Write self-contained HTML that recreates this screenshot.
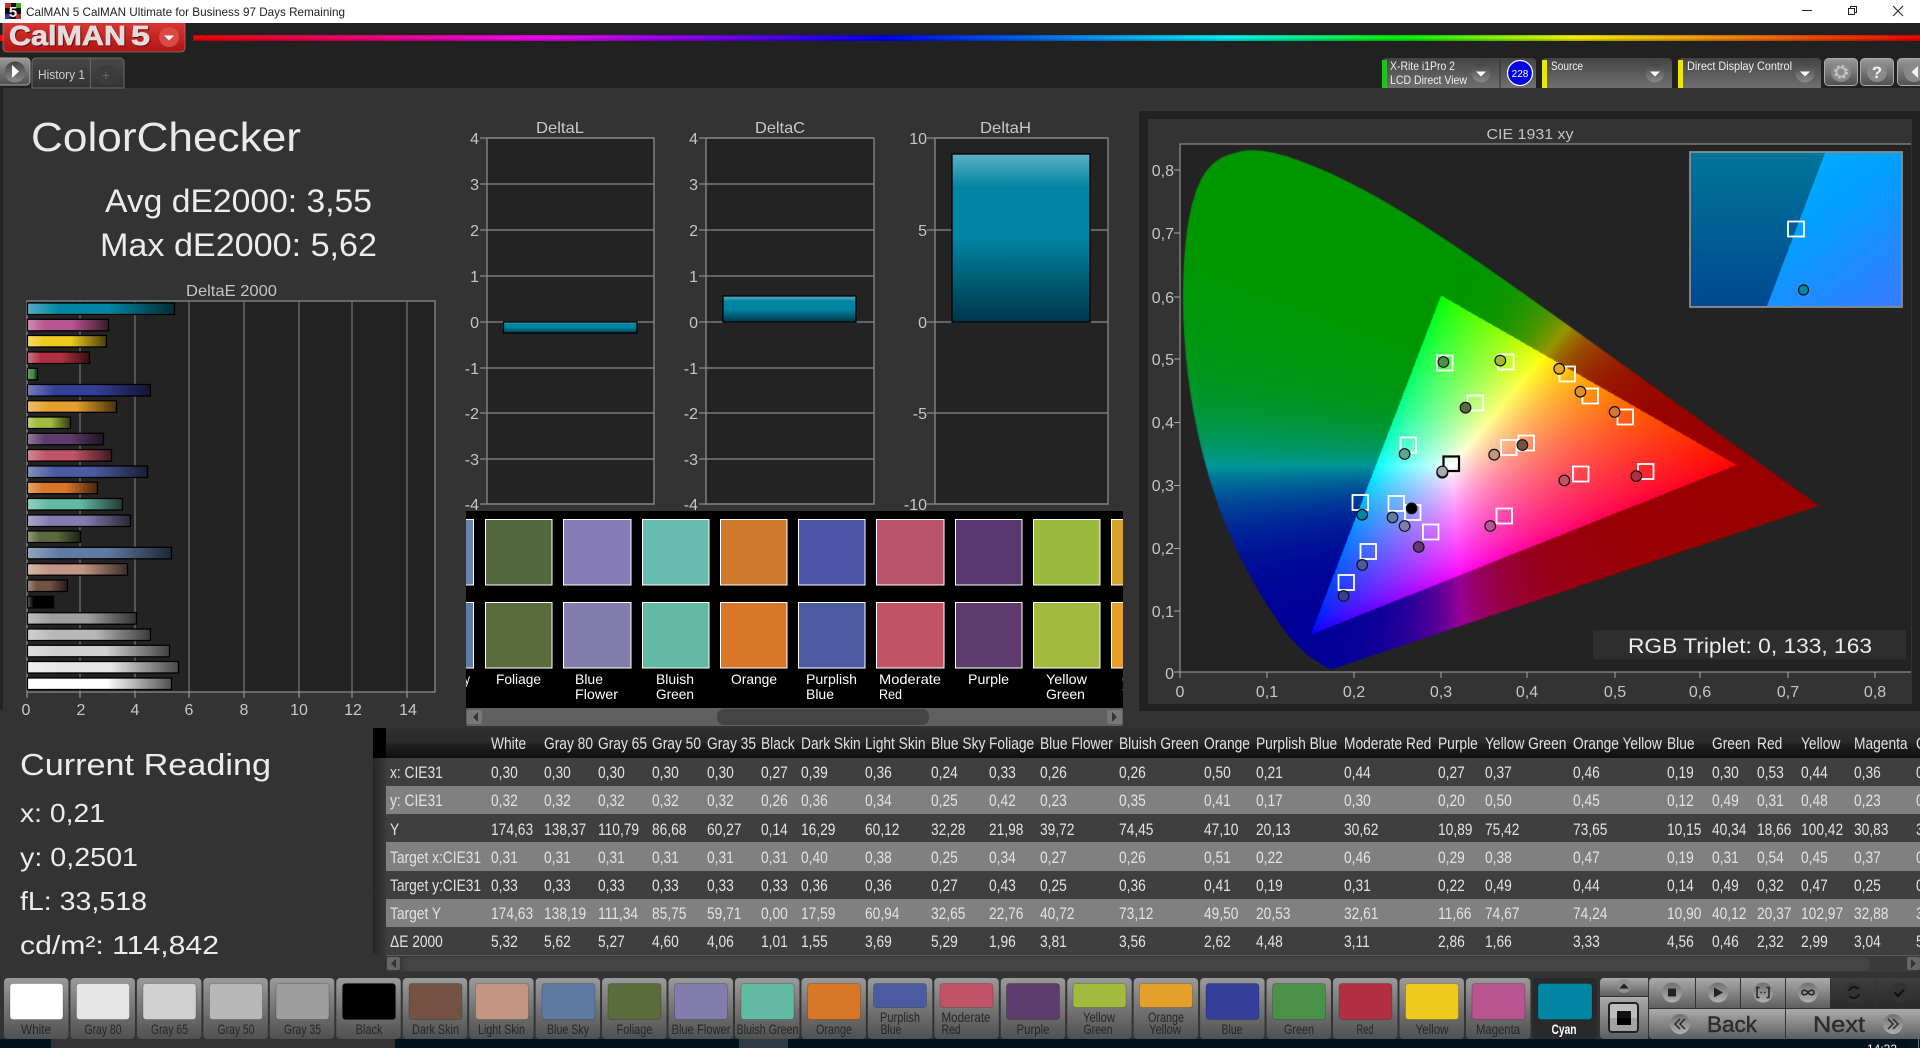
<!DOCTYPE html>
<html><head><meta charset="utf-8"><title>CalMAN 5</title>
<style>
html,body{margin:0;padding:0;width:1920px;height:1048px;overflow:hidden;background:#333}
#plotbg{position:absolute;left:1139px;top:111px;width:781px;height:600px;background:#222}
#plotin{position:absolute;left:1148px;top:119px;width:764px;height:585px;background:#333}
#plot{position:absolute;left:1180px;top:144px;width:731px;height:528px;background:#232323}
#cie{position:absolute;left:1180px;top:144px}
svg#m{position:absolute;left:0;top:0}
svg text{font-family:"Liberation Sans",sans-serif}
.c{position:absolute;top:731px;font:17px/28.17px "Liberation Sans",sans-serif;color:#e2e2e2;transform:scaleX(.81);transform-origin:0 0;white-space:nowrap}
.c span{position:relative;top:-1px}
.ax{fill:#c6c6c6;font-size:16px}
.sw{fill:#fff;font-size:14px}
.tl{fill:#262626;font-size:14px;text-anchor:middle}
</style></head><body>
<div id="plotbg"></div><div id="plotin"></div><div id="plot"></div>
<canvas id="cie" width="731" height="528"></canvas>
<svg id="m" width="1920" height="1048" viewBox="0 0 1920 1048" xmlns="http://www.w3.org/2000/svg">
<defs>
<linearGradient id="rb" x1="0" x2="1" y1="0" y2="0"><stop offset="0" stop-color="#f00"/><stop offset=".2" stop-color="#f0f"/><stop offset=".4" stop-color="#00f"/><stop offset=".6" stop-color="#0ff"/><stop offset=".7" stop-color="#0f0"/><stop offset=".8" stop-color="#ff0"/><stop offset="1" stop-color="#f00"/></linearGradient>
<linearGradient id="rbs" x1="0" x2="0" y1="0" y2="1"><stop offset="0" stop-color="#000" stop-opacity=".25"/><stop offset=".4" stop-color="#000" stop-opacity="0"/><stop offset="1" stop-color="#000" stop-opacity=".35"/></linearGradient>
<linearGradient id="logo" x1="0" x2="0" y1="0" y2="1"><stop offset="0" stop-color="#dc3a36"/><stop offset="1" stop-color="#b01414"/></linearGradient>
<linearGradient id="ctl" x1="0" x2="0" y1="0" y2="1"><stop offset="0" stop-color="#444"/><stop offset="1" stop-color="#6f6f6f"/></linearGradient>
<linearGradient id="btn" x1="0" x2="0" y1="0" y2="1"><stop offset="0" stop-color="#9a9a9a"/><stop offset="1" stop-color="#4f4f4f"/></linearGradient>
<linearGradient id="tab" x1="0" x2="0" y1="0" y2="1"><stop offset="0" stop-color="#484848"/><stop offset="1" stop-color="#333"/></linearGradient>
<linearGradient id="knob" x1="0" x2="0" y1="0" y2="1"><stop offset="0" stop-color="#454545"/><stop offset="1" stop-color="#8a8a8a"/></linearGradient>
<linearGradient id="knob2" x1="0" x2="0" y1="0" y2="1"><stop offset="0" stop-color="#707070"/><stop offset="1" stop-color="#b0b0b0"/></linearGradient>
<linearGradient id="hb" x1="0" x2="1" y1="0" y2="0"><stop offset="0" stop-color="#fff" stop-opacity=".32"/><stop offset=".22" stop-color="#fff" stop-opacity="0"/><stop offset=".55" stop-color="#000" stop-opacity="0"/><stop offset="1" stop-color="#000" stop-opacity=".68"/></linearGradient>
<linearGradient id="vb" x1="0" x2="0" y1="0" y2="1"><stop offset="0" stop-color="#5fb0c6"/><stop offset=".2" stop-color="#0085a3"/><stop offset=".5" stop-color="#0085a3"/><stop offset="1" stop-color="#003548"/></linearGradient>
<linearGradient id="tile" x1="0" x2="0" y1="0" y2="1"><stop offset="0" stop-color="#9a9a9a"/><stop offset="1" stop-color="#505050"/></linearGradient>
<linearGradient id="tile2" x1="0" x2="0" y1="0" y2="1"><stop offset="0" stop-color="#ababab"/><stop offset="1" stop-color="#5e5e5e"/></linearGradient>
<linearGradient id="dk" x1="0" x2="0" y1="0" y2="1"><stop offset="0" stop-color="#3e3e3e"/><stop offset="1" stop-color="#2a2a2a"/></linearGradient>
<linearGradient id="th" x1="0" x2="0" y1="0" y2="1"><stop offset="0" stop-color="#303030"/><stop offset=".5" stop-color="#2a2a2a"/><stop offset=".52" stop-color="#222"/><stop offset="1" stop-color="#0e0e0e"/></linearGradient>
<linearGradient id="rs" x1="0" x2="1" y1="0" y2="0"><stop offset="0" stop-color="#262626"/><stop offset="1" stop-color="#3a3a3a"/></linearGradient>
<linearGradient id="inl" x1="0" x2="0" y1="0" y2="1"><stop offset="0" stop-color="#007499"/><stop offset="1" stop-color="#004a90"/></linearGradient>
<linearGradient id="inr" x1="0" x2="1" y1="0" y2="1"><stop offset="0" stop-color="#00bdff"/><stop offset=".5" stop-color="#00a0ff"/><stop offset="1" stop-color="#3a7aff"/></linearGradient>
<clipPath id="swc"><rect x="466" y="511" width="657" height="197"/></clipPath>
<clipPath id="bt"><rect x="0" y="1039" width="1920" height="9"/></clipPath>
</defs>

<!-- title bar -->
<rect x="0" y="0" width="1920" height="23" fill="#fff"/>
<rect x="5" y="3" width="16" height="16" fill="#111"/>
<rect x="5" y="3" width="6" height="5" fill="#b33"/><rect x="16" y="3" width="5" height="5" fill="#3a3"/><rect x="5" y="14" width="5" height="5" fill="#33a"/><rect x="16" y="14" width="5" height="5" fill="#a33"/>
<text x="13" y="17" font-size="15" font-weight="bold" fill="#eee" text-anchor="middle">5</text>
<text x="26" y="16" font-size="12" fill="#222" textLength="319" lengthAdjust="spacingAndGlyphs">CalMAN 5 CalMAN Ultimate for Business 97 Days Remaining</text>
<rect x="1802" y="10" width="10" height="1" fill="#222"/>
<path d="M1848.500 8.500h6v6h-6zM1850.500 8.500v-2h6v6h-2" fill="none" stroke="#222"/>
<path d="M1893 6l10 10M1903 6l-10 10" stroke="#222" fill="none"/>

<!-- header -->
<rect x="0" y="23" width="1920" height="65" fill="#212121"/>
<rect x="0" y="35" width="4" height="6" fill="#f00"/>
<rect x="193" y="35" width="1727" height="6" fill="url(#rb)"/>
<rect x="193" y="35" width="1727" height="6" fill="url(#rbs)"/>
<rect x="3" y="20" width="182" height="32" rx="4" fill="url(#logo)" stroke="#999" stroke-width=".6"/>
<rect x="0" y="19" width="200" height="4" fill="#fff"/>
<g style="filter:drop-shadow(1px 1px 0 #6a0a0a)">
<text x="9" y="45" font-size="28" font-weight="bold" fill="#e4dcdc" stroke="#e4dcdc" stroke-width=".7" textLength="117" lengthAdjust="spacingAndGlyphs">CalMAN</text>
<text x="131" y="45" font-size="28" font-weight="bold" fill="#e4dcdc" stroke="#e4dcdc" stroke-width=".7" textLength="19" lengthAdjust="spacingAndGlyphs">5</text>
</g>
<circle cx="169" cy="37" r="10" fill="#d84a46"/><path d="M164 35.500h10l-5 5z" fill="#fff"/>

<rect x="-4" y="58" width="34" height="27" rx="4" fill="url(#btn)" stroke="#aaa"/>
<circle cx="15" cy="72" r="10.500" fill="url(#knob)"/><path d="M12 65l7 6.500-7 6.500z" fill="#fff"/>
<path d="M32 88V62a4 4 0 0 1 4-4h84a4 4 0 0 1 4 4v26z" fill="url(#tab)" stroke="#6a6a6a"/>
<line x1="90.500" y1="58" x2="90.500" y2="88" stroke="#666"/>
<text x="38" y="79" font-size="13" fill="#cfcfcf" textLength="47" lengthAdjust="spacingAndGlyphs">History 1</text>
<circle cx="106" cy="75" r="10" fill="#3c3c3c"/><path d="M106 72v7M102.500 75.500h7" stroke="#666" fill="none"/>

<!-- device controls -->
<path d="M1382 88V62a4 4 0 0 1 4-4h146a4 4 0 0 1 4 4v26z" fill="url(#ctl)"/>
<rect x="1382" y="60" width="5" height="28" fill="#1fc21f"/>
<line x1="1500" y1="60" x2="1500" y2="88" stroke="#333"/>
<text x="1390" y="70" font-size="12" fill="#f0f0f0" textLength="65" lengthAdjust="spacingAndGlyphs">X-Rite i1Pro 2</text>
<text x="1390" y="84" font-size="12" fill="#f0f0f0" textLength="77" lengthAdjust="spacingAndGlyphs">LCD Direct View</text>
<circle cx="1481" cy="73" r="9.500" fill="url(#knob)"/><path d="M1476 71.500h10l-5 5z" fill="#fff"/>
<circle cx="1520" cy="73" r="12.500" fill="#0000e8" stroke="#fff" stroke-width="1.200"/>
<text x="1520" y="77" font-size="10" fill="#fff" text-anchor="middle">228</text>
<path d="M1542 88V62a4 4 0 0 1 4-4h122a4 4 0 0 1 4 4v26z" fill="url(#ctl)"/>
<rect x="1542" y="60" width="5" height="28" fill="#e8e800"/>
<text x="1551" y="70" font-size="12" fill="#f0f0f0" textLength="32" lengthAdjust="spacingAndGlyphs">Source</text>
<circle cx="1655" cy="73" r="9.500" fill="url(#knob)"/><path d="M1650 71.500h10l-5 5z" fill="#fff"/>
<path d="M1678 88V62a4 4 0 0 1 4-4h135a4 4 0 0 1 4 4v26z" fill="url(#ctl)"/>
<rect x="1678" y="60" width="5" height="28" fill="#e8e800"/>
<text x="1687" y="70" font-size="12" fill="#f0f0f0" textLength="105" lengthAdjust="spacingAndGlyphs">Direct Display Control</text>
<circle cx="1805" cy="73" r="9.500" fill="url(#knob)"/><path d="M1800 71.500h10l-5 5z" fill="#fff"/>
<rect x="1824.500" y="58.500" width="33" height="27" rx="4" fill="url(#btn)" stroke="#aaa"/>
<circle cx="1841" cy="72" r="10" fill="#8a8a8a"/>
<circle cx="1841" cy="72" r="5.500" fill="none" stroke="#c4c4c4" stroke-width="3" stroke-dasharray="2.400 2"/><circle cx="1841" cy="72" r="4.500" fill="none" stroke="#c4c4c4" stroke-width="1.600"/>
<rect x="1860.500" y="58.500" width="33" height="27" rx="4" fill="url(#btn)" stroke="#aaa"/>
<circle cx="1877" cy="72" r="10" fill="#8a8a8a"/>
<text x="1877" y="78" font-size="17" font-weight="bold" fill="#f2f2f2" text-anchor="middle">?</text>
<rect x="1897.500" y="58.500" width="34" height="27" rx="4" fill="url(#btn)" stroke="#aaa"/>
<circle cx="1914" cy="72" r="10" fill="#8a8a8a"/><path d="M1918 66v12l-6.500-6z" fill="#f2f2f2"/>

<!-- left strip -->
<rect x="0" y="88" width="3" height="622" fill="#232323"/>

<!-- headline -->
<text x="31" y="151" font-size="41" fill="#eaeaea" textLength="270" lengthAdjust="spacingAndGlyphs">ColorChecker</text>
<text x="105" y="212" font-size="32" fill="#ececec" textLength="267" lengthAdjust="spacingAndGlyphs">Avg dE2000: 3,55</text>
<text x="100" y="256" font-size="32" fill="#ececec" textLength="277" lengthAdjust="spacingAndGlyphs">Max dE2000: 5,62</text>

<!-- DeltaE chart -->
<text x="186" y="296" font-size="16" fill="#c4c4c4" textLength="91" lengthAdjust="spacingAndGlyphs">DeltaE 2000</text>
<rect x="27" y="301" width="408" height="391" fill="#232323" stroke="#8a8a8a" stroke-width="1.300"/>
<path d="M80 301v391M135 301v391M189 301v391M244 301v391M299 301v391M352 301v391M407 301v391" stroke="#777" stroke-width="1.200" fill="none"/>
<path d="M27 692v6M80 692v6M135 692v6M189 692v6M244 692v6M299 692v6M352 692v6M407 692v6" stroke="#aaa" fill="none"/>
<g stroke="#000" stroke-width="1.300">
<rect x="27.500" y="303" width="147" height="11.500" fill="#0085a3"/>
<rect x="27.500" y="319.300" width="81" height="11.500" fill="#b8548f"/>
<rect x="27.500" y="335.500" width="79" height="11.500" fill="#eec91f"/>
<rect x="27.500" y="352" width="62" height="11.500" fill="#b03040"/>
<rect x="27.500" y="368.300" width="10" height="11.500" fill="#4a9048"/>
<rect x="27.500" y="384.500" width="123" height="11.500" fill="#343f9a"/>
<rect x="27.500" y="400.800" width="89" height="11.500" fill="#e4a02a"/>
<rect x="27.500" y="417" width="43" height="11.500" fill="#a2ba3e"/>
<rect x="27.500" y="433.300" width="76" height="11.500" fill="#5e3b6c"/>
<rect x="27.500" y="449.600" width="84" height="11.500" fill="#c05365"/>
<rect x="27.500" y="466" width="120" height="11.500" fill="#4a5ba0"/>
<rect x="27.500" y="482.200" width="70" height="11.500" fill="#d87728"/>
<rect x="27.500" y="498.500" width="95" height="11.500" fill="#62baa5"/>
<rect x="27.500" y="515" width="103" height="11.500" fill="#837dae"/>
<rect x="27.500" y="531" width="53" height="11.500" fill="#5a6b3e"/>
<rect x="27.500" y="547.300" width="144" height="11.500" fill="#5f7ba3"/>
<rect x="27.500" y="563.700" width="100" height="11.500" fill="#c29682"/>
<rect x="27.500" y="580" width="40" height="11.500" fill="#735244"/>
<rect x="27.500" y="596.300" width="26" height="11.500" fill="#000"/>
<rect x="27.500" y="612.700" width="109" height="11.500" fill="#9e9e9e"/>
<rect x="27.500" y="629" width="123" height="11.500" fill="#b8b8b8"/>
<rect x="27.500" y="645.300" width="142" height="11.500" fill="#d0d0d0"/>
<rect x="27.500" y="661.500" width="151" height="11.500" fill="#e6e6e6"/>
<rect x="27.500" y="678" width="144" height="11.500" fill="#fff"/>
</g>
<g fill="url(#hb)">
<rect x="28" y="303.500" width="146" height="10.500"/><rect x="28" y="319.800" width="80" height="10.500"/><rect x="28" y="336" width="78" height="10.500"/><rect x="28" y="352.500" width="61" height="10.500"/><rect x="28" y="368.800" width="9" height="10.500"/><rect x="28" y="385" width="122" height="10.500"/><rect x="28" y="401.300" width="88" height="10.500"/><rect x="28" y="417.500" width="42" height="10.500"/><rect x="28" y="433.800" width="75" height="10.500"/><rect x="28" y="450.100" width="83" height="10.500"/><rect x="28" y="466.500" width="119" height="10.500"/><rect x="28" y="482.700" width="69" height="10.500"/><rect x="28" y="499" width="94" height="10.500"/><rect x="28" y="515.500" width="102" height="10.500"/><rect x="28" y="531.500" width="52" height="10.500"/><rect x="28" y="547.800" width="143" height="10.500"/><rect x="28" y="564.200" width="99" height="10.500"/><rect x="28" y="580.500" width="39" height="10.500"/><rect x="28" y="596.800" width="25" height="10.500"/><rect x="28" y="613.200" width="108" height="10.500"/><rect x="28" y="629.500" width="122" height="10.500"/><rect x="28" y="645.800" width="141" height="10.500"/><rect x="28" y="662" width="150" height="10.500"/><rect x="28" y="678.500" width="143" height="10.500"/>
</g>
<g text-anchor="middle" style="font-size:16px;fill:#c8c8c8">
<text x="26" y="715">0</text><text x="81" y="715">2</text><text x="135" y="715">4</text><text x="189" y="715">6</text><text x="244" y="715">8</text><text x="299" y="715">10</text><text x="353" y="715">12</text><text x="408" y="715">14</text>
</g>

<!-- Delta L/C/H -->
<g font-size="16" fill="#c8c8c8">
<text x="536" y="133" textLength="48" lengthAdjust="spacingAndGlyphs">DeltaL</text><text x="755" y="133" textLength="50" lengthAdjust="spacingAndGlyphs">DeltaC</text><text x="980" y="133" textLength="51" lengthAdjust="spacingAndGlyphs">DeltaH</text>
</g>
<g fill="#232323" stroke="#8a8a8a" stroke-width="1.300">
<rect x="487" y="138" width="167" height="366"/><rect x="706" y="138" width="168" height="366"/><rect x="935" y="138" width="173" height="366"/>
</g>
<path d="M480 138h174M480 184h174M480 230h174M480 276h174M480 322h174M480 368h174M480 413h174M480 459h174M480 504h174M699 138h175M699 184h175M699 230h175M699 276h175M699 322h175M699 368h175M699 413h175M699 459h175M699 504h175M927 138h181M927 230h181M927 322h181M927 413h181M927 504h181" stroke="#8a8a8a" stroke-width="1.200" fill="none"/>
<g fill="url(#vb)" stroke="#000" stroke-width="1.300">
<rect x="503.500" y="322" width="133.500" height="11"/><rect x="723" y="296" width="133" height="26"/><rect x="952" y="154" width="138" height="168"/>
</g>
<g class="ax" text-anchor="end">
<text x="479" y="144">4</text><text x="479" y="190">3</text><text x="479" y="236">2</text><text x="479" y="282">1</text><text x="479" y="328">0</text><text x="479" y="374">-1</text><text x="479" y="419">-2</text><text x="479" y="465">-3</text><text x="479" y="510">-4</text>
<text x="698" y="144">4</text><text x="698" y="190">3</text><text x="698" y="236">2</text><text x="698" y="282">1</text><text x="698" y="328">0</text><text x="698" y="374">-1</text><text x="698" y="419">-2</text><text x="698" y="465">-3</text><text x="698" y="510">-4</text>
<text x="927" y="144">10</text><text x="927" y="236">5</text><text x="927" y="328">0</text><text x="927" y="419">-5</text><text x="927" y="510">-10</text>
</g>

<!-- swatch strip -->
<rect x="466" y="511" width="657" height="197" fill="#000"/>
<g clip-path="url(#swc)">
<g stroke="#fff" stroke-width="1">
<rect x="440.500" y="519.500" width="33" height="65.500" fill="#6b83ad"/>
<rect x="485.500" y="519.500" width="66.500" height="65.500" fill="#54683f"/>
<rect x="563.500" y="519.500" width="67.500" height="65.500" fill="#857cb8"/>
<rect x="642.500" y="519.500" width="66.500" height="65.500" fill="#67bcb0"/>
<rect x="720.500" y="519.500" width="66.500" height="65.500" fill="#ce782c"/>
<rect x="798.500" y="519.500" width="66.500" height="65.500" fill="#4c56aa"/>
<rect x="876.500" y="519.500" width="67.500" height="65.500" fill="#b95369"/>
<rect x="955.500" y="519.500" width="66.500" height="65.500" fill="#5a386f"/>
<rect x="1033.500" y="519.500" width="66.500" height="65.500" fill="#9bba3d"/>
<rect x="1111.500" y="519.500" width="66.500" height="65.500" fill="#d8a02c"/>
<rect x="440.500" y="602.500" width="33" height="65.500" fill="#5f7ba3"/>
<rect x="485.500" y="602.500" width="66.500" height="65.500" fill="#5a6b3e"/>
<rect x="563.500" y="602.500" width="67.500" height="65.500" fill="#837dae"/>
<rect x="642.500" y="602.500" width="66.500" height="65.500" fill="#62baa5"/>
<rect x="720.500" y="602.500" width="66.500" height="65.500" fill="#d87728"/>
<rect x="798.500" y="602.500" width="66.500" height="65.500" fill="#4a5ba0"/>
<rect x="876.500" y="602.500" width="67.500" height="65.500" fill="#c05365"/>
<rect x="955.500" y="602.500" width="66.500" height="65.500" fill="#5e3b6c"/>
<rect x="1033.500" y="602.500" width="66.500" height="65.500" fill="#a2ba3e"/>
<rect x="1111.500" y="602.500" width="66.500" height="65.500" fill="#e4a02a"/>
</g>
<g class="sw">
<text x="425" y="684" textLength="45" lengthAdjust="spacingAndGlyphs">Blue Sky</text>
<text x="496" y="684" textLength="45" lengthAdjust="spacingAndGlyphs">Foliage</text>
<text x="575" y="684" textLength="28" lengthAdjust="spacingAndGlyphs">Blue</text><text x="575" y="699" textLength="43" lengthAdjust="spacingAndGlyphs">Flower</text>
<text x="656" y="684" textLength="38" lengthAdjust="spacingAndGlyphs">Bluish</text><text x="656" y="699" textLength="38" lengthAdjust="spacingAndGlyphs">Green</text>
<text x="731" y="684" textLength="46" lengthAdjust="spacingAndGlyphs">Orange</text>
<text x="806" y="684" textLength="51" lengthAdjust="spacingAndGlyphs">Purplish</text><text x="806" y="699" textLength="28" lengthAdjust="spacingAndGlyphs">Blue</text>
<text x="879" y="684" textLength="62" lengthAdjust="spacingAndGlyphs">Moderate</text><text x="879" y="699" textLength="23" lengthAdjust="spacingAndGlyphs">Red</text>
<text x="968" y="684" textLength="41" lengthAdjust="spacingAndGlyphs">Purple</text>
<text x="1046" y="684" textLength="41" lengthAdjust="spacingAndGlyphs">Yellow</text><text x="1046" y="699" textLength="39" lengthAdjust="spacingAndGlyphs">Green</text>
<text x="1122" y="684">Orange</text><text x="1122" y="699">Yellow</text>
</g>
</g>
<rect x="466" y="708" width="657" height="18" rx="2" fill="#606060"/>
<rect x="717" y="709" width="212" height="16" rx="7" fill="#444"/>
<rect x="467" y="710" width="15" height="14" rx="2" fill="#777"/><path d="M478 712v10l-5-5z" fill="#333"/>
<rect x="1107" y="710" width="15" height="14" rx="2" fill="#777"/><path d="M1112 712v10l5-5z" fill="#333"/>

<!-- CIE overlay -->
<path d="M1180 672V144H1911M1180 672H1911" stroke="#8a8a8a" stroke-width="1.300" fill="none"/>
<path d="M1174 170h6M1174 233h6M1174 297h6M1174 359h6M1174 422.500h6M1174 485.500h6M1174 548.500h6M1174 611h6M1174 672h6M1180 672v6M1267 672v6M1354 672v6M1441 672v6M1527 672v6M1615 672v6M1700 672v6M1788 672v6M1875 672v6" stroke="#aaa" fill="none"/>
<text x="1530" y="139" font-size="15" fill="#c4c4c4" text-anchor="middle" textLength="87" lengthAdjust="spacingAndGlyphs">CIE 1931 xy</text>
<g class="ax" text-anchor="end">
<text x="1174" y="176">0,8</text><text x="1174" y="239">0,7</text><text x="1174" y="303">0,6</text><text x="1174" y="365">0,5</text><text x="1174" y="428">0,4</text><text x="1174" y="491">0,3</text><text x="1174" y="554">0,2</text><text x="1174" y="617">0,1</text><text x="1174" y="679">0</text>
</g>
<g class="ax" text-anchor="middle">
<text x="1180" y="697">0</text><text x="1267" y="697">0,1</text><text x="1354" y="697">0,2</text><text x="1441" y="697">0,3</text><text x="1527" y="697">0,4</text><text x="1615" y="697">0,5</text><text x="1700" y="697">0,6</text><text x="1788" y="697">0,7</text><text x="1875" y="697">0,8</text>
</g>
<g fill="none" stroke="#fff" stroke-width="1.800">
<rect x="1437" y="355.500" width="15.500" height="15"/><rect x="1498" y="354.500" width="15.500" height="15"/><rect x="1559.500" y="366.500" width="15.500" height="15"/><rect x="1582.500" y="388.500" width="15.500" height="15"/><rect x="1617.500" y="409.500" width="15.500" height="15"/><rect x="1467.500" y="395.500" width="15.500" height="15"/><rect x="1518.500" y="435.500" width="15.500" height="15"/><rect x="1501" y="440" width="15.500" height="15"/><rect x="1638" y="464" width="15.500" height="15"/><rect x="1573" y="466.500" width="15.500" height="15"/><rect x="1496.500" y="508.500" width="15.500" height="15"/><rect x="1423" y="524.500" width="15.500" height="15"/><rect x="1400.500" y="437.500" width="15.500" height="15"/><rect x="1360.500" y="544" width="15.500" height="15"/><rect x="1338.500" y="575" width="15.500" height="15"/><rect x="1352.500" y="495" width="15.500" height="15"/><rect x="1388.500" y="496" width="15.500" height="15"/><rect x="1405" y="505" width="15.500" height="15"/>
<rect x="1443.500" y="456.500" width="15.500" height="14.500" stroke="#000" stroke-width="2.200"/>
</g>
<g stroke="#111" stroke-width="1.200">
<circle cx="1443.400" cy="362" r="5.300" fill="#4a9048"/><circle cx="1500.300" cy="360.600" r="5.300" fill="#a8b63e"/><circle cx="1559.200" cy="368.800" r="5.300" fill="#e8a628"/><circle cx="1580.400" cy="391.700" r="5.300" fill="#e09030"/><circle cx="1614.600" cy="411.900" r="5.300" fill="#d87728"/><circle cx="1465.500" cy="407.700" r="5.300" fill="#5a6b3e"/><circle cx="1522.400" cy="445" r="5.300" fill="#735244"/><circle cx="1494.200" cy="454.700" r="5.300" fill="#c29682"/><circle cx="1636.300" cy="476.100" r="5.300" fill="#b03040"/><circle cx="1564.300" cy="480.400" r="5.300" fill="#c05365"/><circle cx="1490.200" cy="526" r="5.300" fill="#b8548f"/><circle cx="1418.700" cy="547" r="5.300" fill="#5e3b6c"/><circle cx="1404.600" cy="454" r="5.300" fill="#62a596"/><circle cx="1362.200" cy="564.900" r="5.300" fill="#4a5ba0"/><circle cx="1343.600" cy="596" r="5.300" fill="#343f9a"/><circle cx="1362.200" cy="514.700" r="5.300" fill="#0085a3"/><circle cx="1392.500" cy="517.400" r="5.300" fill="#5f7ba3"/><circle cx="1404.600" cy="526" r="5.300" fill="#837dae"/><circle cx="1411.600" cy="508.400" r="5.300" fill="#000"/><circle cx="1442.300" cy="472.500" r="5.500" fill="#777"/><circle cx="1442.300" cy="471.500" r="5.300" fill="#aaa"/>
</g>
<!-- inset -->
<rect x="1690" y="152" width="212" height="155" fill="url(#inr)" stroke="#8a8a8a" stroke-width="1.800"/>
<path d="M1691 153H1825L1767 306H1691z" fill="url(#inl)"/>
<rect x="1788" y="221.500" width="16" height="15" fill="none" stroke="#fff" stroke-width="1.800"/>
<circle cx="1803.500" cy="290" r="5" fill="#0085a3" stroke="#111" stroke-width="1.200"/>
<rect x="1593" y="630" width="313" height="29.500" fill="#2e2e2e"/>
<text x="1628" y="653" font-size="21" fill="#ececec" textLength="244" lengthAdjust="spacingAndGlyphs">RGB Triplet: 0, 133, 163</text>

<!-- Current reading -->
<text x="20" y="775" font-size="31" fill="#ececec" textLength="251" lengthAdjust="spacingAndGlyphs">Current Reading</text>
<text x="20" y="822" font-size="26" fill="#ececec" textLength="85" lengthAdjust="spacingAndGlyphs">x: 0,21</text>
<text x="20" y="866" font-size="26" fill="#ececec" textLength="118" lengthAdjust="spacingAndGlyphs">y: 0,2501</text>
<text x="20" y="910" font-size="26" fill="#ececec" textLength="127" lengthAdjust="spacingAndGlyphs">fL: 33,518</text>
<text x="20" y="954" font-size="26" fill="#ececec" textLength="199" lengthAdjust="spacingAndGlyphs">cd/m²: 114,842</text>

<!-- table backgrounds -->
<rect x="373" y="728" width="13" height="30" fill="#000"/>
<rect x="373" y="758" width="13" height="197" fill="url(#rs)"/>
<rect x="386" y="728" width="1534" height="30" fill="url(#th)"/>
<rect x="386" y="758" width="1534" height="28" fill="#3f3f3f"/>
<rect x="386" y="786" width="1534" height="28" fill="#808080"/>
<rect x="386" y="814" width="1534" height="28" fill="#3f3f3f"/>
<rect x="386" y="842" width="1534" height="29" fill="#808080"/>
<rect x="386" y="871" width="1534" height="28" fill="#3f3f3f"/>
<rect x="386" y="899" width="1534" height="28" fill="#808080"/>
<rect x="386" y="927" width="1534" height="28" fill="#3f3f3f"/>
<rect x="386" y="955" width="1534" height="17" fill="#3a3a3a"/>
<line x1="386" y1="955.500" x2="1920" y2="955.500" stroke="#5a5a5a"/>
<rect x="403" y="957" width="1467" height="14" rx="6" fill="#444"/>
<rect x="387" y="957" width="13" height="13" rx="2" fill="#666"/><path d="M396 959v9l-5-4.500z" fill="#333"/>
<rect x="1907" y="957" width="13" height="13" rx="2" fill="#666"/><path d="M1911 959v9l5-4.500z" fill="#333"/>

<!-- tiles -->
<g fill="url(#tile)">
<rect x="4" y="978" width="64.500" height="61" rx="4"/><rect x="70.450" y="978" width="64.500" height="61" rx="4"/><rect x="136.900" y="978" width="64.500" height="61" rx="4"/><rect x="203.350" y="978" width="64.500" height="61" rx="4"/><rect x="269.800" y="978" width="64.500" height="61" rx="4"/><rect x="336.250" y="978" width="64.500" height="61" rx="4"/><rect x="402.700" y="978" width="64.500" height="61" rx="4"/><rect x="469.150" y="978" width="64.500" height="61" rx="4"/><rect x="535.600" y="978" width="64.500" height="61" rx="4"/><rect x="602.050" y="978" width="64.500" height="61" rx="4"/><rect x="668.500" y="978" width="64.500" height="61" rx="4"/><rect x="734.950" y="978" width="64.500" height="61" rx="4"/><rect x="801.400" y="978" width="64.500" height="61" rx="4"/><rect x="867.850" y="978" width="64.500" height="61" rx="4"/><rect x="934.300" y="978" width="64.500" height="61" rx="4"/><rect x="1000.750" y="978" width="64.500" height="61" rx="4"/><rect x="1067.200" y="978" width="64.500" height="61" rx="4"/><rect x="1133.650" y="978" width="64.500" height="61" rx="4"/><rect x="1200.100" y="978" width="64.500" height="61" rx="4"/><rect x="1266.550" y="978" width="64.500" height="61" rx="4"/><rect x="1333" y="978" width="64.500" height="61" rx="4"/><rect x="1399.450" y="978" width="64.500" height="61" rx="4"/><rect x="1465.900" y="978" width="64.500" height="61" rx="4"/>
</g>
<rect x="1532.400" y="978" width="64.500" height="61" rx="4" fill="#2a2a2a"/>
<g stroke="#000" stroke-opacity=".18">
<rect x="10" y="983.500" width="53" height="36" rx="3" fill="#fff"/>
<rect x="76.500" y="983.500" width="53" height="36" rx="3" fill="#e6e6e6"/>
<rect x="143" y="983.500" width="53" height="36" rx="3" fill="#d0d0d0"/>
<rect x="209.500" y="983.500" width="53" height="36" rx="3" fill="#b8b8b8"/>
<rect x="276" y="983.500" width="53" height="36" rx="3" fill="#9e9e9e"/>
<rect x="342.500" y="983.500" width="53" height="36" rx="3" fill="#000"/>
<rect x="409" y="983.500" width="53" height="36" rx="3" fill="#735244"/>
<rect x="475.500" y="983.500" width="53" height="36" rx="3" fill="#c29682"/>
<rect x="542" y="983.500" width="53" height="36" rx="3" fill="#5f7ba3"/>
<rect x="608" y="983.500" width="53" height="36" rx="3" fill="#5a6b3e"/>
<rect x="674.500" y="983.500" width="53" height="36" rx="3" fill="#837dae"/>
<rect x="741" y="983.500" width="53" height="36" rx="3" fill="#62baa5"/>
<rect x="807.500" y="983.500" width="53" height="36" rx="3" fill="#d87728"/>
<rect x="873.500" y="983.500" width="53" height="24" rx="3" fill="#4a5ba0"/>
<rect x="940" y="983.500" width="53" height="24" rx="3" fill="#c05365"/>
<rect x="1006.500" y="983.500" width="53" height="36" rx="3" fill="#5e3b6c"/>
<rect x="1073" y="983.500" width="53" height="24" rx="3" fill="#a2ba3e"/>
<rect x="1139.500" y="983.500" width="53" height="24" rx="3" fill="#e4a02a"/>
<rect x="1206" y="983.500" width="53" height="36" rx="3" fill="#343f9a"/>
<rect x="1272.500" y="983.500" width="53" height="36" rx="3" fill="#4a9048"/>
<rect x="1339" y="983.500" width="53" height="36" rx="3" fill="#b03040"/>
<rect x="1405.500" y="983.500" width="53" height="36" rx="3" fill="#eec91f"/>
<rect x="1472" y="983.500" width="53" height="36" rx="3" fill="#b8548f"/>
<rect x="1538" y="983.500" width="54" height="36" rx="3" fill="#0085a3"/>
</g>
<g class="tl">
<text x="36" y="1034" textLength="30" lengthAdjust="spacingAndGlyphs">White</text>
<text x="103" y="1034" textLength="37" lengthAdjust="spacingAndGlyphs">Gray 80</text>
<text x="169.500" y="1034" textLength="37" lengthAdjust="spacingAndGlyphs">Gray 65</text>
<text x="236" y="1034" textLength="37" lengthAdjust="spacingAndGlyphs">Gray 50</text>
<text x="302.500" y="1034" textLength="37" lengthAdjust="spacingAndGlyphs">Gray 35</text>
<text x="369" y="1034" textLength="27" lengthAdjust="spacingAndGlyphs">Black</text>
<text x="435.500" y="1034" textLength="47" lengthAdjust="spacingAndGlyphs">Dark Skin</text>
<text x="501.500" y="1034" textLength="47" lengthAdjust="spacingAndGlyphs">Light Skin</text>
<text x="568" y="1034" textLength="42" lengthAdjust="spacingAndGlyphs">Blue Sky</text>
<text x="634.500" y="1034" textLength="36" lengthAdjust="spacingAndGlyphs">Foliage</text>
<text x="701" y="1034" textLength="59" lengthAdjust="spacingAndGlyphs">Blue Flower</text>
<text x="767.500" y="1034" textLength="62" lengthAdjust="spacingAndGlyphs">Bluish Green</text>
<text x="834" y="1034" textLength="36" lengthAdjust="spacingAndGlyphs">Orange</text>
<text x="900" y="1022" textLength="40" lengthAdjust="spacingAndGlyphs">Purplish</text><text x="891" y="1034" textLength="21" lengthAdjust="spacingAndGlyphs">Blue</text>
<text x="966" y="1022" textLength="49" lengthAdjust="spacingAndGlyphs">Moderate</text><text x="951" y="1034" textLength="19" lengthAdjust="spacingAndGlyphs">Red</text>
<text x="1033" y="1034" textLength="33" lengthAdjust="spacingAndGlyphs">Purple</text>
<text x="1099" y="1022" textLength="32" lengthAdjust="spacingAndGlyphs">Yellow</text><text x="1098" y="1034" textLength="29" lengthAdjust="spacingAndGlyphs">Green</text>
<text x="1166" y="1022" textLength="36" lengthAdjust="spacingAndGlyphs">Orange</text><text x="1165" y="1034" textLength="32" lengthAdjust="spacingAndGlyphs">Yellow</text>
<text x="1232" y="1034" textLength="21" lengthAdjust="spacingAndGlyphs">Blue</text>
<text x="1299" y="1034" textLength="30" lengthAdjust="spacingAndGlyphs">Green</text>
<text x="1365" y="1034" textLength="17" lengthAdjust="spacingAndGlyphs">Red</text>
<text x="1432" y="1034" textLength="33" lengthAdjust="spacingAndGlyphs">Yellow</text>
<text x="1498" y="1034" textLength="44" lengthAdjust="spacingAndGlyphs">Magenta</text>
</g>
<text x="1564" y="1034" font-size="14" font-weight="bold" fill="#fff" text-anchor="middle" textLength="25" lengthAdjust="spacingAndGlyphs">Cyan</text>

<!-- transport controls -->
<path d="M1600 996v-14a4 4 0 0 1 4-4h44v18z" fill="url(#tile2)"/>
<circle cx="1624" cy="986" r="7" fill="#8f8f8f"/><path d="M1619 988.500l5-5 5 5z" fill="#222"/>
<path d="M1600 997h48v42h-44a4 4 0 0 1-4-4z" fill="url(#tile2)"/>
<rect x="1609" y="1003" width="29" height="29" rx="3" fill="#bdbdbd" stroke="#222" stroke-width="2"/>
<rect x="1617" y="1011" width="14" height="14" fill="#111"/><rect x="1617" y="1018" width="14" height="7" fill="#000"/>
<rect x="1610" y="1018" width="27" height="13" fill="#000" fill-opacity=".14"/>

<path d="M1649 1008v-26a4 4 0 0 1 4-4h42v30z" fill="url(#tile2)"/>
<rect x="1696" y="978" width="44" height="30" fill="url(#tile2)"/>
<rect x="1741" y="978" width="44" height="30" fill="url(#tile2)"/>
<rect x="1786" y="978" width="44" height="30" fill="url(#tile2)"/>
<rect x="1831" y="978" width="44" height="30" fill="url(#dk)"/>
<rect x="1876" y="978" width="44" height="30" fill="url(#dk)"/>
<circle cx="1672" cy="992.500" r="10" fill="url(#knob2)"/><rect x="1668" y="988.500" width="8" height="8" fill="#222"/>
<circle cx="1718" cy="992.500" r="10" fill="url(#knob2)"/><path d="M1714 987.500v10l9-5z" fill="#222"/>
<circle cx="1763" cy="992.500" r="10" fill="url(#knob2)"/><path d="M1759.500 987.500h-2.500v10h2.500M1766.500 987.500h2.500v10h-2.500" fill="none" stroke="#222" stroke-width="1.500"/><path d="M1760.500 992.500h1.500M1764 992.500h1.500" stroke="#222" stroke-width="1.500"/>
<circle cx="1808" cy="992.500" r="10" fill="url(#knob2)"/><path d="M1808 992.500c-2-3-6-3-6 0s4 3 6 0 6-3 6 0-4 3-6 0z" fill="none" stroke="#222" stroke-width="1.500"/>
<circle cx="1854" cy="992.500" r="10" fill="#333"/><path d="M1849 991a5.500 5.500 0 0 1 9.500-2M1859 994a5.500 5.500 0 0 1-9.500 2" fill="none" stroke="#141414" stroke-width="2"/>
<circle cx="1899" cy="992.500" r="10" fill="#333"/><path d="M1894.500 992.500l3.500 3.500 6-6.500" fill="none" stroke="#0f0f0f" stroke-width="2"/>
<path d="M1649 1009h136v30h-132a4 4 0 0 1-4-4z" fill="url(#tile2)"/>
<rect x="1786" y="1009" width="134" height="30" fill="url(#tile2)"/>
<circle cx="1680" cy="1024" r="10" fill="url(#knob2)"/><path d="M1680 1019l-5 5 5 5M1685 1019l-5 5 5 5" fill="none" stroke="#2a2a2a" stroke-width="1.500"/>
<circle cx="1893" cy="1024" r="10" fill="url(#knob2)"/><path d="M1888 1019l5 5-5 5M1893 1019l5 5-5 5" fill="none" stroke="#2a2a2a" stroke-width="1.500"/>
<text x="1707" y="1032" font-size="22" fill="#2c2c2c" stroke="#2c2c2c" stroke-width=".4" textLength="50" lengthAdjust="spacingAndGlyphs">Back</text>
<text x="1813" y="1032" font-size="22" fill="#2c2c2c" stroke="#2c2c2c" stroke-width=".4" textLength="52" lengthAdjust="spacingAndGlyphs">Next</text>

<!-- taskbar sliver -->
<rect x="0" y="1039" width="1920" height="9" fill="#00141e"/>
<rect x="51" y="1039" width="344" height="9" fill="#333"/>
<rect x="739" y="1039" width="49" height="9" fill="#2e3a44"/>
<g clip-path="url(#bt)"><text x="1867" y="1053" font-size="12" fill="#eee">14:32</text></g>
<rect x="1918" y="1039" width="1" height="9" fill="#778"/>
</svg>

<div class="c" style="left:390px"><span>&nbsp;</span><br>x: CIE31<br>y: CIE31<br>Y<br>Target x:CIE31<br>Target y:CIE31<br>Target Y<br>ΔE 2000</div>
<div class="c" style="left:491px"><span>White</span><br>0,30<br>0,32<br>174,63<br>0,31<br>0,33<br>174,63<br>5,32</div>
<div class="c" style="left:544px"><span>Gray 80</span><br>0,30<br>0,32<br>138,37<br>0,31<br>0,33<br>138,19<br>5,62</div>
<div class="c" style="left:598px"><span>Gray 65</span><br>0,30<br>0,32<br>110,79<br>0,31<br>0,33<br>111,34<br>5,27</div>
<div class="c" style="left:652px"><span>Gray 50</span><br>0,30<br>0,32<br>86,68<br>0,31<br>0,33<br>85,75<br>4,60</div>
<div class="c" style="left:707px"><span>Gray 35</span><br>0,30<br>0,32<br>60,27<br>0,31<br>0,33<br>59,71<br>4,06</div>
<div class="c" style="left:761px"><span>Black</span><br>0,27<br>0,26<br>0,14<br>0,31<br>0,33<br>0,00<br>1,01</div>
<div class="c" style="left:801px"><span>Dark Skin</span><br>0,39<br>0,36<br>16,29<br>0,40<br>0,36<br>17,59<br>1,55</div>
<div class="c" style="left:865px"><span>Light Skin</span><br>0,36<br>0,34<br>60,12<br>0,38<br>0,36<br>60,94<br>3,69</div>
<div class="c" style="left:931px"><span>Blue Sky</span><br>0,24<br>0,25<br>32,28<br>0,25<br>0,27<br>32,65<br>5,29</div>
<div class="c" style="left:989px"><span>Foliage</span><br>0,33<br>0,42<br>21,98<br>0,34<br>0,43<br>22,76<br>1,96</div>
<div class="c" style="left:1040px"><span>Blue Flower</span><br>0,26<br>0,23<br>39,72<br>0,27<br>0,25<br>40,72<br>3,81</div>
<div class="c" style="left:1119px"><span>Bluish Green</span><br>0,26<br>0,35<br>74,45<br>0,26<br>0,36<br>73,12<br>3,56</div>
<div class="c" style="left:1204px"><span>Orange</span><br>0,50<br>0,41<br>47,10<br>0,51<br>0,41<br>49,50<br>2,62</div>
<div class="c" style="left:1256px"><span>Purplish Blue</span><br>0,21<br>0,17<br>20,13<br>0,22<br>0,19<br>20,53<br>4,48</div>
<div class="c" style="left:1344px"><span>Moderate Red</span><br>0,44<br>0,30<br>30,62<br>0,46<br>0,31<br>32,61<br>3,11</div>
<div class="c" style="left:1438px"><span>Purple</span><br>0,27<br>0,20<br>10,89<br>0,29<br>0,22<br>11,66<br>2,86</div>
<div class="c" style="left:1485px"><span>Yellow Green</span><br>0,37<br>0,50<br>75,42<br>0,38<br>0,49<br>74,67<br>1,66</div>
<div class="c" style="left:1573px"><span>Orange Yellow</span><br>0,46<br>0,45<br>73,65<br>0,47<br>0,44<br>74,24<br>3,33</div>
<div class="c" style="left:1667px"><span>Blue</span><br>0,19<br>0,12<br>10,15<br>0,19<br>0,14<br>10,90<br>4,56</div>
<div class="c" style="left:1712px"><span>Green</span><br>0,30<br>0,49<br>40,34<br>0,31<br>0,49<br>40,12<br>0,46</div>
<div class="c" style="left:1757px"><span>Red</span><br>0,53<br>0,31<br>18,66<br>0,54<br>0,32<br>20,37<br>2,32</div>
<div class="c" style="left:1801px"><span>Yellow</span><br>0,44<br>0,48<br>100,42<br>0,45<br>0,47<br>102,97<br>2,99</div>
<div class="c" style="left:1854px"><span>Magenta</span><br>0,36<br>0,23<br>30,83<br>0,37<br>0,25<br>32,88<br>3,04</div>
<div class="c" style="left:1916px"><span>Cyan</span><br>0,21<br>0,25<br>33,52<br>0,19<br>0,33<br>33,52<br>5,62</div>

<script>
(function(){
var W=731,H=528,c=document.getElementById('cie'),g=c.getContext('2d');
var L=[[.1741,.005],[.1714,.0051],[.1644,.0109],[.1566,.0177],[.144,.0297],[.1241,.0578],[.1096,.0868],[.088,.1327],[.062,.2007],[.035,.295],[.014,.4127],[.003,.5384],[.003,.6548],[.012,.7502],[.033,.812],[.0743,.8345],[.1142,.8262],[.1547,.8059],[.1929,.7816],[.2296,.7543],[.2658,.7243],[.3016,.6923],[.3373,.6589],[.3731,.6245],[.4087,.5896],[.4441,.5547],[.4788,.5202],[.5125,.4866],[.5448,.4544],[.5752,.4242],[.6029,.3965],[.627,.3725],[.6658,.334],[.6915,.3083],[.719,.2809],[.7347,.2653]];
function px(x){return .4+869*x}function py(y){return 528.3-628*y}
var T=[[.64,.33],[.3,.6],[.15,.06]];
function side(a,b,x,y){return (b[0]-a[0])*(y-a[1])-(b[1]-a[1])*(x-a[0])}
var t=document.createElement('canvas');t.width=W;t.height=H;var tg=t.getContext('2d'),im=tg.createImageData(W,H),d=im.data;
for(var j=0;j<H;j++){for(var i=0;i<W;i++){
 var x=(i+.5-.4)/869,y=(528.3-j-.5)/628;if(y<.002)y=.002;
 var X=x/y,Z=(1-x-y)/y;
 var r=3.2406*X-1.5372-.4986*Z,gg=-.9689*X+1.8758+.0415*Z,b=.0557*X-.204+1.057*Z;
 var s1=side(T[0],T[1],x,y),s2=side(T[1],T[2],x,y),s3=side(T[2],T[0],x,y);
 var ins=(s1>=0&&s2>=0&&s3>=0)||(s1<=0&&s2<=0&&s3<=0);
 r=Math.max(r,0);gg=Math.max(gg,0);b=Math.max(b,0);var m=Math.max(r,gg,b,1e-6);r/=m;gg/=m;b/=m;
 var k=(i+j*W)*4;
 if(ins){d[k]=255*Math.pow(r,.75);d[k+1]=255*Math.pow(gg,.75);d[k+2]=255*Math.pow(b,.75)}
 else{d[k]=152*Math.pow(r,2.3);d[k+1]=150*Math.pow(gg,2.3);d[k+2]=152*Math.pow(b,2.3)}
 d[k+3]=255;
}}
tg.putImageData(im,0,0);
g.beginPath();
g.moveTo(px(L[0][0]),py(L[0][1]));
for(var n=1;n<L.length-1;n++){
 var a=L[n],e=L[n+1];
 g.quadraticCurveTo(px(a[0]),py(a[1]),px((a[0]+e[0])/2),py((a[1]+e[1])/2));
}
g.lineTo(px(L[L.length-1][0]),py(L[L.length-1][1]));
g.closePath();g.clip();g.drawImage(t,0,0);
})();
</script>
</body></html>
